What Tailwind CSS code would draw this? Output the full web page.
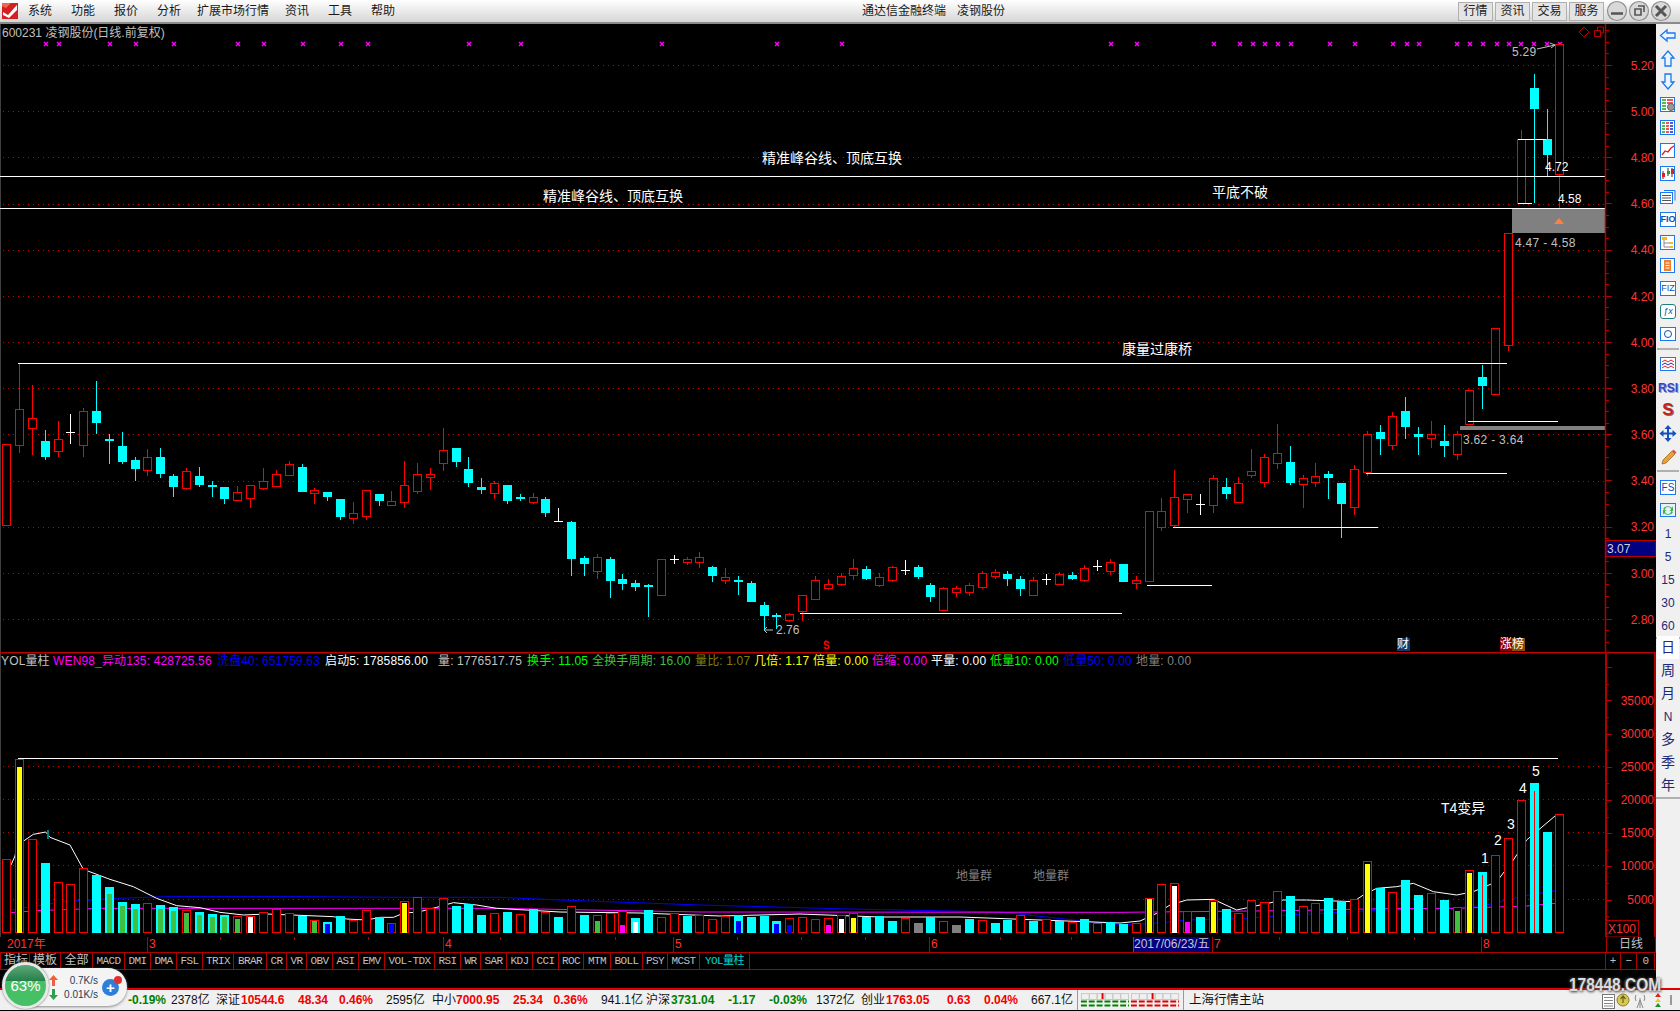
<!DOCTYPE html>
<html>
<head>
<meta charset="utf-8">
<script src="https://cdn.jsdelivr.net/npm/@tailwindcss/browser@4"></script>
</head>
<body class="bg-black">
<div class="relative flex h-[1011px] w-[1680px] flex-col overflow-hidden bg-black font-['Liberation_Sans','Noto_Sans_CJK_SC',sans-serif] text-xs">

  <!-- Title bar -->
  <header class="flex h-[24px] shrink-0 items-center border-b-2 border-[#8a8a8a] bg-linear-to-b from-white to-[#d6d6d6] text-[12px] text-[#1a1a1a]">
    <svg class="ml-[2px] h-[16px] w-[16px]" viewBox="0 0 16 16"><rect width="16" height="16" fill="#d42020"/><path d="M1 9 L6 12 L15 2 L15 7 L7 15 L1 12 Z" fill="#fff"/><path d="M0 0 H9 L4 5 L0 3Z" fill="#e86a50"/></svg>
    <nav class="flex">
      <span class="ml-[10px] w-[43px]">系统</span>
      <span class="w-[43px]">功能</span>
      <span class="w-[43px]">报价</span>
      <span class="w-[40px]">分析</span>
      <span class="w-[88px]">扩展市场行情</span>
      <span class="w-[43px]">资讯</span>
      <span class="w-[43px]">工具</span>
      <span class="w-[30px]">帮助</span>
    </nav>
    <div class="ml-[461px] flex w-[95px]">通达信金融终端</div>
    <div class="w-[60px]">凌钢股份</div>
    <div class="ml-[441px] flex h-[19px] gap-[2px] text-[#222]">
      <span class="flex h-[19px] w-[35px] items-center justify-center border border-[#b0b0b0] bg-[#e4e4e4]">行情</span>
      <span class="flex h-[19px] w-[35px] items-center justify-center border border-[#b0b0b0] bg-[#e4e4e4]">资讯</span>
      <span class="flex h-[19px] w-[35px] items-center justify-center border border-[#b0b0b0] bg-[#e4e4e4]">交易</span>
      <span class="flex h-[19px] w-[35px] items-center justify-center border border-[#b0b0b0] bg-[#e4e4e4]">服务</span>
    </div>
    <svg class="ml-[1px] h-[22px] w-[70px] shrink-0" viewBox="0 0 70 22">
      <g fill="#d8d8d8" stroke="#8f8f8f" stroke-width="1.2"><circle cx="12" cy="11" r="9.5"/><circle cx="34" cy="11" r="9.5"/><circle cx="56" cy="11" r="9.5"/></g>
      <path d="M6 13.5H18" stroke="#555" stroke-width="2.5"/>
      <path d="M30 9h6v6h-6zM33 6h6v6" fill="none" stroke="#555" stroke-width="1.6"/>
      <path d="M51 6l10 10M61 6l-10 10" stroke="#555" stroke-width="3"/>
    </svg>
  </header>

  <div class="flex h-[964px] shrink-0">
    <!-- Charts -->
    <main class="flex w-[1656px] flex-col">
      <svg id="price" class="block h-[628px] w-[1656px] shrink-0" viewBox="0 24 1656 628" font-size="12" fill="#c0c0c0">
        <g id="priceLayer"></g>
        <g fill="#fff" font-size="14">
          <text x="762" y="163">精准峰谷线、顶底互换</text>
          <text x="543" y="201">精准峰谷线、顶底互换</text>
          <text x="1212" y="197">平底不破</text>
          <text x="1122" y="354">康量过康桥</text>
        </g>
        <text x="2" y="37">600231 凌钢股份(日线.前复权)</text>
        <text x="1512" y="56" letter-spacing="0.3">5.29</text>
        <path d="M1537 49L1555 45M1550 43l5 2l-4 3" stroke="#c0c0c0" fill="none"/>
        <text x="1545" y="171" fill="#fff">4.72</text>
        <text x="1558" y="203" fill="#fff">4.58</text>
        <text x="1515" y="247" letter-spacing="0.3">4.47 - 4.58</text>
        <text x="1463" y="444" letter-spacing="0.3">3.62 - 3.64</text>
        <text x="776" y="634">2.76</text>
        <path d="M773 630H764M767 627l-3 3l3 3" stroke="#c0c0c0" fill="none"/>
        <path d="M1559 218l5 6h-10z" fill="#ff8040"/>
        <path d="M1584 27l5 5l-5 5l-5-5z" fill="none" stroke="#c00000"/>
        <path d="M1594.5 30.500h6v6h-6zM1597.500 30v-3h6v6h-3" fill="none" stroke="#c00000"/>
        <g text-anchor="end" fill="#ff3232">
          <text x="1654" y="70">5.20</text><text x="1654" y="116">5.00</text><text x="1654" y="162">4.80</text><text x="1654" y="208">4.60</text><text x="1654" y="254">4.40</text><text x="1654" y="301">4.20</text><text x="1654" y="347">4.00</text><text x="1654" y="393">3.80</text><text x="1654" y="439">3.60</text><text x="1654" y="485">3.40</text><text x="1654" y="531">3.20</text><text x="1654" y="578">3.00</text><text x="1654" y="624">2.80</text>
        </g>
        <rect x="1606" y="540.500" width="50" height="16" fill="#000080" stroke="#c00000"/>
        <text x="1607" y="553" fill="#d0d0d0">3.07</text>
        <rect x="1397" y="638" width="13" height="13" fill="#0a3c6e"/><text x="1397" y="648" fill="#fff">财</text>
        <rect x="1500" y="638" width="12" height="13" fill="#8b0000"/><rect x="1512" y="638" width="13" height="13" fill="#8b4a00"/><text x="1500" y="648" fill="#fff">涨榜</text>
        <text x="823" y="649" fill="#ff0000" font-weight="bold" font-size="10">S</text><path d="M826 640l2 2h-4z" fill="#f00"/>
      </svg>
      <svg id="volume" class="block h-[285px] w-[1656px] shrink-0" viewBox="0 652 1656 285" font-size="12" fill="#c0c0c0">
        <g id="volLayer"></g>
        <g fill="#fff" font-size="14">
          <text x="1441" y="813">T4变异</text>
          <text x="1481" y="863">1</text><text x="1494" y="845">2</text><text x="1507" y="829">3</text><text x="1519" y="793">4</text><text x="1532" y="776">5</text>
        </g>
        <text x="956" y="880" fill="#808080">地量群</text>
        <text x="1033" y="880" fill="#808080">地量群</text>
        <g text-anchor="end" fill="#ff3232">
          <text x="1654" y="705">35000</text><text x="1654" y="738">30000</text><text x="1654" y="771">25000</text><text x="1654" y="804">20000</text><text x="1654" y="837">15000</text><text x="1654" y="870">10000</text><text x="1654" y="904">5000</text>
        </g>
        <text x="1608" y="933" fill="#ff3232">X100</text>
        <g font-size="12" letter-spacing="0.15">
          <text x="1" y="665">YOL量柱</text>
          <text x="53" y="665" fill="#ff00ff">WEN98_异动135: 428725.56</text>
          <text x="217" y="665" fill="#0000ff">洗盘40: 651759.63</text>
          <text x="325" y="665" fill="#ffffff">启动5: 1785856.00</text>
          <text x="438" y="665" fill="#c0c0c0">量: 1776517.75</text>
          <text x="527" y="665" fill="#00ff00">换手: 11.05</text>
          <text x="592" y="665" fill="#40c040">全换手周期: 16.00</text>
          <text x="695" y="665" fill="#808000">量比: 1.07</text>
          <text x="754" y="665" fill="#ffff00">几倍: 1.17</text>
          <text x="813" y="665" fill="#ffff00">倍量: 0.00</text>
          <text x="872" y="665" fill="#ff00ff">倍缩: 0.00</text>
          <text x="931" y="665" fill="#ffffff">平量: 0.00</text>
          <text x="990" y="665" fill="#00ff00">低量10: 0.00</text>
          <text x="1063" y="665" fill="#0000ff">低量50: 0.00</text>
          <text x="1136" y="665" fill="#808080">地量: 0.00</text>
        </g>
      </svg>

      <!-- Time axis -->
      <div class="relative flex h-[16px] shrink-0 border-b border-[#b00000] text-[12px] leading-[15px] text-[#ff3232]">
        <span class="w-[147px] pl-[7px]">2017年</span>
        <span class="w-[296px] border-l border-[#b00000] pl-[1px]">3</span>
        <span class="w-[230px] border-l border-[#b00000] pl-[1px]">4</span>
        <span class="w-[256px] border-l border-[#b00000] pl-[1px]">5</span>
        <span class="w-[204px] border-l border-[#b00000] pl-[1px]">6</span>
        <span class="w-[77px] overflow-hidden whitespace-nowrap border-l border-[#3050c0] bg-[#000080] text-[#c8c8c8]">2017/06/23/五</span>
        <span class="ml-[2px] w-[269px] border-l border-[#b00000] pl-[1px]">7</span>
        <span class="w-[125px] border-l border-[#b00000] pl-[1px]">8</span>
        <span class="w-[50px] border-x border-[#b00000] text-center text-[#c0c0c0]">日线</span>
        <svg class="absolute left-0 top-0 h-[3px] w-[1606px]" viewBox="0 0 1606 3"><path d="M220.500 0v3M294.500 0v3M368.500 0v3M500.500 0v3M615.500 0v3M737.500 0v3M801.500 0v3M865.500 0v3M1000.500 0v3M1071.500 0v3M1279.500 0v3M1347.500 0v3M1414.500 0v3" stroke="#b00000"/></svg>
      </div>
      <!-- Tabs -->
      <div class="flex h-[17px] shrink-0 items-center border-b border-[#b00000] font-['Liberation_Mono','Noto_Sans_CJK_SC',monospace] text-[11px] tracking-[-0.6px] text-[#c0c0c0] *:flex *:h-full *:items-center *:justify-center *:border-r *:border-[#b00000]">
        <span class="w-[30px] border-l border-[#b00000] pl-[2px] text-[12px] tracking-normal">指标</span>
        <span class="w-[31px] text-[12px] tracking-normal">模板</span>
        <span class="w-[32px] text-[12px] tracking-normal">全部</span>
        <span class="w-[32px]">MACD</span><span class="w-[26px]">DMI</span><span class="w-[26px]">DMA</span><span class="w-[26px]">FSL</span><span class="w-[31px]">TRIX</span><span class="w-[33px]">BRAR</span><span class="w-[20px]">CR</span><span class="w-[20px]">VR</span><span class="w-[26px]">OBV</span><span class="w-[26px]">ASI</span><span class="w-[26px]">EMV</span><span class="w-[50px]">VOL-TDX</span><span class="w-[26px]">RSI</span><span class="w-[20px]">WR</span><span class="w-[26px]">SAR</span><span class="w-[26px]">KDJ</span><span class="w-[26px]">CCI</span><span class="w-[25px]">ROC</span><span class="w-[27px]">MTM</span><span class="w-[32px]">BOLL</span><span class="w-[25px]">PSY</span><span class="w-[32px]">MCST</span>
        <span class="w-[50px] text-[#00d8d8]">YOL量柱</span>
        <span class="w-[855px] !border-r-0"></span>
        <span class="w-[16px] border-l border-[#b00000] !tracking-normal">+</span><span class="w-[16px]">−</span><span class="w-[18px]">0</span>
      </div>
      <div class="h-[18px] shrink-0 bg-black"></div>
    </main>

    <!-- Side toolbar -->
    <aside class="flex w-[24px] flex-col items-center bg-[#f0f0f0] text-[#1c2a78] *:h-[23px] *:shrink-0">
      <svg class="w-[18px]" viewBox="0 0 18 23"><path d="M1.500 11.500L8 6v3h8v5H8v3z" fill="#eaf5ff" stroke="#1a78f0" stroke-width="1.300"/></svg>
      <svg class="w-[18px]" viewBox="0 0 18 23"><path d="M9 4l6 7h-3v8H6v-8H3z" fill="#eaf5ff" stroke="#1a78f0" stroke-width="1.300"/></svg>
      <svg class="w-[18px]" viewBox="0 0 18 23"><path d="M9 19l6-7h-3V4H6v8H3z" fill="#eaf5ff" stroke="#1a78f0" stroke-width="1.300"/></svg>
      <svg class="w-[18px]" viewBox="0 0 18 23"><rect x="1.500" y="4.500" width="14" height="14" fill="#fff" stroke="#1a78f0"/><path d="M3 7h4M3 10h4M3 13h4M3 16h4" stroke="#20a020" stroke-width="1.500"/><path d="M8 7h6M8 10h6" stroke="#e02020" stroke-width="1.500"/><circle cx="12" cy="14" r="3.500" fill="#999" stroke="#666"/></svg>
      <svg class="w-[18px]" viewBox="0 0 18 23"><rect x="1.500" y="4.500" width="14" height="14" fill="#fff" stroke="#1a78f0"/><path d="M3 7h3M3 10h3M3 13h3M3 16h3" stroke="#20a020" stroke-width="1.500"/><path d="M7 7h3M7 10h3M7 13h3M7 16h3" stroke="#e02020" stroke-width="1.500"/><path d="M11 7h3M11 10h3M11 13h3M11 16h3" stroke="#2020d0" stroke-width="1.500"/></svg>
      <svg class="w-[18px]" viewBox="0 0 18 23"><rect x="1.500" y="4.500" width="14" height="14" fill="#fff" stroke="#1a78f0"/><path d="M3 16l3-4 3 1 3-4 3-2" fill="none" stroke="#e02020" stroke-width="1.300"/></svg>
      <svg class="w-[18px]" viewBox="0 0 18 23"><rect x="1.500" y="4.500" width="14" height="14" fill="#fff" stroke="#1a78f0"/><path d="M4 9v8M9 6v8M13 6v9" stroke="#333"/><rect x="3" y="11" width="3" height="4" fill="#e02020"/><rect x="8" y="9" width="3" height="3" fill="#20a020"/><rect x="12" y="7" width="3" height="5" fill="#e02020"/></svg>
      <svg class="w-[18px]" viewBox="0 0 18 23"><path d="M5 5.500h11v10" fill="none" stroke="#1a78f0"/><rect x="1.500" y="7.500" width="12" height="11" fill="#fff" stroke="#1a78f0"/><path d="M3 10.500h9M3 13h9M3 15.500h9" stroke="#555"/></svg>
      <div class="flex w-[18px] items-center justify-center"><span class="flex h-[15px] w-[16px] items-center justify-center border border-[#1a78f0] bg-white text-[9px] font-bold leading-none text-[#0a50b0]">FIO</span></div>
      <svg class="w-[18px]" viewBox="0 0 18 23"><rect x="1.500" y="4.500" width="14" height="14" fill="#fff" stroke="#1a78f0"/><path d="M5 8v8h5M5 12h5" fill="none" stroke="#888"/><rect x="3" y="6" width="5" height="3" fill="#f0c020"/><rect x="10" y="11" width="4" height="2" fill="#f0c020"/><rect x="10" y="15" width="4" height="2" fill="#f0c020"/></svg>
      <svg class="w-[18px]" viewBox="0 0 18 23"><rect x="1.500" y="4.500" width="14" height="14" fill="#fff" stroke="#1a78f0"/><rect x="5" y="6" width="7" height="11" fill="#f08030"/><path d="M6.500 9h4M6.500 11.500h4M6.500 14h4" stroke="#fff"/></svg>
      <div class="flex w-[18px] items-center justify-center"><span class="flex h-[15px] w-[16px] items-center justify-center border border-[#1a78f0] bg-white text-[9px] leading-none text-[#0a50b0]">FIZ</span></div>
      <div class="flex w-[18px] items-center justify-center"><span class="flex h-[15px] w-[16px] items-center justify-center rounded-[3px] border border-[#208080] bg-white text-[9px] italic leading-none text-[#0a50b0]">ƒx</span></div>
      <svg class="w-[18px]" viewBox="0 0 18 23"><rect x="1.500" y="4.500" width="15" height="13" fill="#fff" stroke="#1a78f0"/><circle cx="9" cy="11" r="3.500" fill="none" stroke="#0a50b0"/></svg>
      <div class="!h-[2px] mt-[2px] mb-[3px] w-[22px] bg-[#b0b0b0]"></div>
      <svg class="w-[18px]" viewBox="0 0 18 23"><rect x="1.500" y="4.500" width="15" height="13" fill="#fff" stroke="#1a78f0"/><path d="M3 9l3-2 3 2 3-2 3 2" fill="none" stroke="#e02020"/><path d="M3 12l3-2 3 2 3-2 3 2" fill="none" stroke="#2020d0"/><path d="M3 15l3-2 3 2 3-2 3 2" fill="none" stroke="#e02020"/></svg>
      <div class="flex w-[24px] items-center justify-center text-[12px] font-bold text-[#3848c0] [text-shadow:1px_1px_0_#9098d8]">RSI</div>
      <div class="flex w-[24px] items-center justify-center text-[17px] font-bold text-[#c82020] [text-shadow:1px_1px_0_#707070]">S</div>
      <svg class="w-[18px]" viewBox="0 0 18 23"><path d="M9 3l3.500 4h-2.500v3.500h3.500V8l4 3.500-4 3.500v-2.500h-3.500V16h2.500L9 20l-3.500-4H8v-3.500H4.500V15L.5 11.500 4.500 8v2.500H8V7H5.500z" fill="#1450c0"/></svg>
      <svg class="w-[18px]" viewBox="0 0 18 23"><path d="M3 19l1-4L13 6l3 3-9 9z" fill="#f0a030" stroke="#806020" stroke-width=".7"/><path d="M13 6l1.500-1.500 3 3L16 9z" fill="#e05050"/></svg>
      <div class="!h-[2px] mt-[2px] mb-[4px] w-[22px] bg-[#b0b0b0]"></div>
      <div class="flex w-[18px] items-center justify-center"><span class="flex h-[15px] w-[16px] items-center justify-center border border-[#1a78f0] bg-white text-[10px] leading-none text-[#0a50b0]">FS</span></div>
      <svg class="w-[18px]" viewBox="0 0 18 23"><rect x="1.500" y="4.500" width="15" height="13" fill="#e8f0ff" stroke="#1a78f0"/><path d="M4 10a5 4 0 0 1 9-1l1-2v5h-4l2-1a3 3 0 0 0-6 0zM14 13a5 4 0 0 1-9 1l-1 2v-5h4l-2 1a3 3 0 0 0 6 0z" fill="#40b040"/></svg>
      <div class="flex items-center justify-center text-[12px]">1</div>
      <div class="flex items-center justify-center text-[12px]">5</div>
      <div class="flex items-center justify-center text-[12px]">15</div>
      <div class="flex items-center justify-center text-[12px]">30</div>
      <div class="flex items-center justify-center text-[12px]">60</div>
      <div class="!h-[2px] -mb-[3px] w-[24px] bg-[#b0b0b0]"></div>
      <div class="flex w-[22px] items-center justify-center bg-white text-[14px]">日</div>
      <div class="flex items-center justify-center text-[14px]">周</div>
      <div class="flex items-center justify-center text-[14px]">月</div>
      <div class="flex items-center justify-center text-[12px]">N</div>
      <div class="flex items-center justify-center text-[14px]">多</div>
      <div class="flex items-center justify-center text-[14px]">季</div>
      <div class="flex items-center justify-center text-[14px]">年</div>
      <div class="!h-[2px] w-[24px] bg-[#b0b0b0]"></div>
    </aside>
  </div>

  <!-- Status bar -->
  <footer class="flex h-[23px] shrink-0 items-center border-t-2 border-b border-t-[#e00000] border-b-black bg-[#f0f0f0] text-[12px] font-normal text-[#111]">
    <span class="ml-[128px] w-[43px] font-bold text-[#008000]">-0.19%</span>
    <span class="w-[45px]">2378亿</span>
    <span class="w-[25px]">深证</span><span class="w-[57px] font-bold text-[#f00000]">10544.6</span><span class="w-[41px] font-bold text-[#f00000]">48.34</span><span class="w-[47px] font-bold text-[#f00000]">0.46%</span>
    <span class="w-[46px]">2595亿</span>
    <span class="w-[24px]">中小</span><span class="w-[57px] font-bold text-[#f00000]">7000.95</span><span class="w-[40.6px] font-bold text-[#f00000]">25.34</span><span class="w-[47.4px] font-bold text-[#f00000]">0.36%</span>
    <span class="w-[45px]">941.1亿</span>
    <span class="w-[25px]">沪深</span><span class="w-[57px] font-bold text-[#008000]">3731.04</span><span class="w-[41px] font-bold text-[#008000]">-1.17</span><span class="w-[47px] font-bold text-[#008000]">-0.03%</span>
    <span class="w-[45px]">1372亿</span>
    <span class="w-[25px]">创业</span><span class="w-[61px] font-bold text-[#f00000]">1763.05</span><span class="w-[37px] font-bold text-[#f00000]">0.63</span><span class="w-[47px] font-bold text-[#f00000]">0.04%</span>
    <span class="w-[46px]">667.1亿</span>
    <svg class="h-[20px] w-[107px] shrink-0 border-x border-[#999]" viewBox="0 0 107 20">
      <g fill="none" stroke="#c8c8c8"><rect x="3.500" y="3.500" width="8" height="6"/><rect x="11.500" y="3.500" width="8" height="6"/><rect x="19.500" y="3.500" width="8" height="6"/><rect x="27.500" y="3.500" width="8" height="6"/><rect x="35.500" y="3.500" width="8" height="6"/><rect x="43.500" y="3.500" width="8" height="6"/><rect x="54.500" y="3.500" width="8" height="6"/><rect x="62.500" y="3.500" width="8" height="6"/><rect x="70.500" y="3.500" width="8" height="6"/><rect x="78.500" y="3.500" width="8" height="6"/><rect x="86.500" y="3.500" width="8" height="6"/><rect x="94.500" y="3.500" width="8" height="6"/></g>
      <rect x="24" y="3" width="2" height="6" fill="#e00000"/><rect x="75" y="3" width="2" height="6" fill="#e00000"/>
      <path d="M3 11.500h49M3 15.500h49" stroke="#008000" stroke-width="2" stroke-dasharray="6 2"/>
      <path d="M54 11.500h49M54 15.500h49" stroke="#e00000" stroke-width="2" stroke-dasharray="6 2"/>
    </svg>
    <span class="ml-[5px] w-[78px] shrink-0 text-[12.500px]">上海行情主站</span>
    <svg class="ml-[330px] h-[20px] w-[80px] shrink-0" viewBox="0 0 80 20">
      <rect x="5.500" y="4.500" width="12" height="14" fill="#fff" stroke="#777"/><path d="M7 7.500h9M7 10.500h9M7 13.500h9M7 16h9" stroke="#888"/>
      <circle cx="26" cy="10" r="6" fill="#d8c850" stroke="#8a8030"/><path d="M26 6v7M23.500 9l2.500-3 2.500 3" fill="none" stroke="#6a6020" stroke-width="1.200"/>
      <path d="M43 8v10M40 18l3-8 3 8M39 5a6 6 0 0 0 0 6M47 5a6 6 0 0 1 0 6" fill="none" stroke="#888"/>
      <path d="M61 3l3 4h-6z" fill="#e02020"/><path d="M61 8l3 4h-6z" fill="#e8d020"/><path d="M61 13l3 4h-6z" fill="#209020"/>
      <path d="M74 5v4M74 9v6" stroke="#999" stroke-width="2"/>
    </svg>
  </footer>

  <!-- Watermark -->
  <div class="absolute left-[1569px] top-[973px] origin-left scale-x-[0.86] text-[18px] font-bold leading-[24px] text-[#dcdcdc] [text-shadow:1px_1px_3px_#444,-1px_0_3px_#666]">178448.COM</div>

  <!-- Network speed widget -->
  <div class="absolute left-[22px] top-[968px] flex h-[38px] w-[105px] items-center rounded-r-[19px] bg-[#f4f4f4] shadow-[0_1px_3px_#888]">
    <div class="ml-[27px] flex w-[49px] flex-col gap-[1px] text-[10px] leading-[13px] text-[#20405a]">
      <span class="flex justify-between"><svg class="mt-[1px] h-[11px] w-[9px]" viewBox="0 0 9 11"><path d="M4.500 0L9 5H6v6H3V5H0z" fill="#f06040"/></svg>0.7K/s</span>
      <span class="flex justify-between"><svg class="mt-[1px] h-[11px] w-[9px]" viewBox="0 0 9 11"><path d="M4.500 11L9 6H6V0H3v6H0z" fill="#30a050"/></svg>0.01K/s</span>
    </div>
    <div class="relative ml-[4px] flex h-[17px] w-[17px] items-center justify-center rounded-full bg-[#2f7fd8] text-[15px] font-bold leading-none text-white">+<span class="absolute -right-[3px] -top-[3px] h-[8px] w-[8px] rounded-full bg-[#e03030]"></span></div>
  </div>
  <div class="absolute left-[2px] top-[962px] flex h-[47px] w-[47px] items-center justify-center overflow-hidden rounded-full border-[3px] border-[#e8e8e8] bg-[#45c064] text-[15px] text-white shadow-[0_0_2px_#666]">
    <div class="absolute inset-x-0 top-0 h-[16px] bg-linear-to-b from-[#5ea87a] to-[#23804a]"></div>
    <span class="relative">63%</span>
  </div>
</div>

<script>
var X = function (i) { return Math.round(6.3 + 12.835 * i); };
// Candle tables: [kind, high, bodyTop, bodyBottom, low] in the units of each capture
var a = [['r',253,253,494,494],['r',12,148,254,278],['r',75,175,203,285],['c',210,243,291,299],['r',183,238,272,291],['w',162,217,217,252],['r',144,153,254,291],['c',63,153,189,222],['c',222,237,243,312],['c',216,258,306,312],['c',291,300,327,363],['r',267,292,329,348],['c',264,291,342,354],['c',342,348,381,411],['r',324,334,383,390],['c',321,348,375,381],['c',363,375,381,411],['c',381,381,417,432],['r',378,397,419,419],['r',376,376,413,444],['r',324,364,383,390],['r',330,343,377,381],['r',303,313,345,348],['c',312,321,396,396],['r',384,391,398,432],['c',396,396,411,423],['c',417,417,471,480],['r',426,460,473,492],['r',391,391,467,480],['c',402,402,423,438],['r',393,424,434,438],['r',303,376,425,444],['r',309,343,392,402],['r',324,343,350,390],['r',204,271,308,333],['c',264,264,306,321],['c',291,327,369,381],['c',354,381,390,402],['r',363,370,398,417],['c',375,375,423,432],['c',402,411,417,423],['r',399,412,425,432],['c',411,417,459,471],['w',444,482,482,482]];
var b = [['c',486,487,522,538],['c',519,521,526,538],['r',517,520,533,540],['c',520,522,542,558],['c',536,540,545,551],['c',541,544,548,552],['c',545,546,548,576],['r',522,522,555,555],['w',518,522,522,526],['r',520,522,525,527],['r',515,520,525,530],['c',528,529,538,543],['r',530,539,541,545],['c',538,541,543,555],['c',542,544,562,562],['c',562,565,575,587],['c',572,574,576,587],['r',572,573,579,581],['r',555,555,570,580],['r',538,541,559,559],['r',540,545,549,551],['r',535,538,545,547],['r',522,530,537,541],['c',528,531,540,541],['r',535,539,546,548],['r',528,529,541,543],['w',523,532,532,537],['c',527,529,539,540],['c',544,546,557,562],['r',548,549,569,569],['r',547,549,553,557],['r',544,546,553,556],['r',533,535,548,550],['r',531,534,538,540],['c',533,536,540,547],['c',538,540,550,556],['r',539,541,555,556],['w',536,540,540,546],['r',534,536,545,546],['c',534,537,540,541],['r',527,530,541,543],['w',523,528,528,533],['r',522,525,533,537]];
var c = [['c',702,702,756,756],['r',738,750,759,777],['r',544,544,752,752],['r',504,544,592,603],['r',420,502,584,590],['r',492,493,508,549],['w',492,523,523,555],['r',435,445,524,549],['c',444,471,492,507],['r',441,460,515,515],['r',357,424,435,444],['r',372,382,455,471],['r',282,370,398,417],['c',348,396,459,465],['r',435,445,461,534],['r',399,439,455,471],['c',423,432,444,507],['c',459,459,522,624],['r',405,418,530,555],['r',303,313,425,438],['c',285,306,327,375],['r',246,259,344,360],['c',201,243,291,327],['c',291,312,321,375],['r',273,313,323,354],['c',285,333,348,381],['r',303,313,371,390],['r',180,181,281,285],['c',105,141,168,237],['r',-6,-6,191,195]];
var candles = [];
a.forEach(function (r) { candles.push([r[0]].concat(r.slice(1).map(function (v) { return v / 3 + 360; }))); });
b.forEach(function (r) { candles.push([r[0]].concat(r.slice(1).map(function (v) { return v * 1.0714; }))); });
c.forEach(function (r) { candles.push([r[0]].concat(r.slice(1).map(function (v) { return v / 3 + 330; }))); });
candles.push(['r', 233, 233, 345, 351], ['r', 130, 139.3, 203.3, 203.3], ['c', 74, 88, 109, 203.3], ['c', 109, 139.3, 155, 176], ['r', 44, 44, 173.7, 208]);

var s = '';
function line(x1, y1, x2, y2, col, w, extra) { return '<line x1="' + x1 + '" y1="' + y1 + '" x2="' + x2 + '" y2="' + y2 + '" stroke="' + col + '" stroke-width="' + (w || 1) + '" ' + (extra || '') + '/>'; }
var dot = 'stroke-dasharray="1 4"';
var i, y;
s += '<rect x="0" y="24" width="1" height="628" fill="#404040"/>';
for (i = 0; i <= 12; i++) { y = Math.round(65 + 46.17 * i) + .5; s += line(3, y, 1605, y, '#c80000', 1, dot); }
// magenta marks along the top
[45.7,59,110,135.7,174,238,264,302.5,340.7,367.5,469,521,662,777,842,1111,1137,1214,1240,1252.5,1265,1278,1291,1330,1355,1393,1406.6,1419,1457,1470,1483,1496.6,1509,1521,1534,1547,1560].forEach(function (x) {
  x = Math.round(x);
  s += '<path d="M' + (x - 2) + ' 42L' + (x + 2) + ' 46M' + (x + 2) + ' 42L' + (x - 2) + ' 46" stroke="#ff00ff" stroke-width="1.5"/>';
});
// candles
candles.forEach(function (d, i) {
  var x = X(i), col = d[0] === 'r' ? '#ff0000' : d[0] === 'c' ? '#00ffff' : '#ffffff';
  var top = Math.round(d[2]), bot = Math.round(d[3]);
  s += line(x + .5, Math.round(d[1]), x + .5, top, col);
  s += line(x + .5, bot, x + .5, Math.round(d[4]), col);
  if (d[0] === 'w') { s += line(x - 4, top + .5, x + 5, top + .5, col); s += line(x + .5, top, x + .5, bot, col); }
  else if (d[0] === 'c') { s += '<rect x="' + (x - 4) + '" y="' + top + '" width="9" height="' + Math.max(2, bot - top) + '" fill="#00ffff"/>'; s += line(x + .5, top, x + .5, bot, col); }
  else { s += '<rect x="' + (x - 3.5) + '" y="' + (top + .5) + '" width="8" height="' + Math.max(2, bot - top) + '" fill="#000" stroke="#ff0000"/>'; }
});
// horizontal annotation lines
[[0,176.5,1605,1],[0,208.5,1605,1],[18,363.5,1507,1],[1468,421.5,1558,1],[1366,473.5,1507,1],[1173,527.5,1378,1],[1147,585.5,1212,1],[800,613.5,1122,1],[1518,139.5,1546,1],[1518,203.5,1532,1]].forEach(function (l) { s += line(l[0], l[1], l[2], l[1], '#ffffff', l[3]); });
s += '<rect x="1512" y="209" width="93" height="24" fill="#808080"/>';
s += '<rect x="1460" y="426" width="145" height="4" fill="#808080"/>';
// price axis
s += line(1605.5, 24, 1605.5, 652, '#b00000', 1.5);
for (i = -3; i <= 50; i++) { y = Math.round(65 + 11.54 * i) + .5; if (y > 24) s += line(1605, y, i % 4 === 0 ? 1612 : 1609, y, '#b00000'); }
document.getElementById('priceLayer').innerHTML = s;

// Volume panel
var base = 932.7;
var T = function (v, off) { return v / 3 + off; };
var v1 = [['r',328],['y',28,51],['r',268],['c',339],['r',397],['r',403],['r',355],['c',375],['cg',411,432],['cg',456,468],['cg',462,477],['r',460],['cg',465,477],['cg',471,483],['rg',481,489],['cg',486,495],['cg',492,501],['cg',495,501],['rg',499,507],['rw',499,501],['r',487],['r',478],['r',490],['c',498],['rg',511,513],['cb',516,522],['c',498],['r',511],['r',481],['c',502],['rb',520,522],['y',454,459],['r',442],['r',475],['r',445],['c',468],['c',462],['c',495],['r',490]];
var v2 = [['c',912],['r',914],['c',909],['r',912],['c',917],['r',906],['c',915],['rg',915,921],['r',913],['rm',911,925],['cw',918,922],['c',910],['r',917],['r',913],['c',916],['r',915],['r',919],['r',916],['cb',915,921],['c',917],['c',916],['cb',921,924],['rb',918,925],['r',917],['r',919],['rm',918,925],['rw',915,919],['ry',913,918],['c',917],['c',916],['c',921],['r',918],['x',923],['c',917],['r',921],['x',925],['c',919],['r',920],['c',923],['c',920],['r',915],['c',921],['r',919],['c',921],['r',922],['c',919],['r',923],['c',922]];
var v3 = [['c',522],['r',520],['y',445,447],['r',403],['rw',400,408],['rm',484,516],['c',501],['y',451,456],['c',477],['r',490],['r',451],['r',457],['r',424],['c',438],['r',469],['r',460],['c',444],['c',453],['r',447],['y',334,342],['c',414],['r',427],['c',390],['c',435],['r',430],['c',450],['rg',472,483],['y',361,369],['c',366],['r',316],['r',265],['r',151],['c',99],['c',246],['r',193]];
var bars = [];
v1.forEach(function (r) { bars.push([r[0], T(r[1], 750), r[2] ? T(r[2], 750) : 0]); });
v2.forEach(function (r) { bars.push([r[0], r[1], r[2] || 0]); });
v3.forEach(function (r) { bars.push([r[0], T(r[1], 750), r[2] ? T(r[2], 750) : 0]); });

var poly = function (pts, col) { return '<polyline fill="none" stroke="' + col + '" stroke-width="1" points="' + pts.join(' ') + '"/>'; };
var conv = function (arr, ox) { return arr.map(function (p) { return (p[0] / 3 + ox) + ',' + (p[1] / 3 + 750); }); };
var t = '';
t += '<rect x="0" y="652" width="1" height="285" fill="#404040"/>';
[766.5, 799.5, 832.5, 865.5, 899.5].forEach(function (y) { t += line(3, y, 1605, y, '#c80000', 1, dot); });
var white = conv([[33,345],[45,318],[50,290],[75,270],[100,253],[137,246],[150,262],[210,285],[250,358],[330,388],[400,410],[470,445],[530,467],[600,473],[660,487],[730,495],[800,492],[1000,500],[1040,507],[1100,510],[1140,502],[1180,502],[1210,490],[1260,485],[1310,472],[1360,458],[1430,465],[1490,475]], 0)
  .concat(['560,912','640,913','720,916','800,914','880,917','960,917','1040,920'])
  .concat(conv([[0,519],[60,513],[110,490],[150,465],[200,450],[280,448],[350,480],[420,465],[490,450],[560,450],[700,455],[730,435],[770,415],[830,410],[880,400],[940,425],[1010,435],[1060,425],[1130,395],[1180,330],[1220,270],[1305,198]], 1120));
var blue = conv([[33,480],[110,468],[200,453],[280,450],[350,445],[500,440],[700,440],[900,440],[1200,442],[1500,442]], 0)
  .concat(['560,900','700,905','850,909','1000,912'])
  .concat(conv([[0,525],[100,520],[200,510],[380,505],[500,495],[800,480],[1000,475],[1100,465],[1200,440],[1305,422]], 1120));
var mag = conv([[33,488],[110,482],[300,475],[1500,475]], 0)
  .concat(['700,912'])
  .concat(conv([[0,487],[200,485],[500,482],[800,476],[1000,475],[1100,472],[1220,468],[1305,460]], 1120));
t += poly(blue, '#0000ff') + poly(mag, '#ff00ff') + poly(white, '#ffffff');
t += '<rect x="47" y="830" width="2" height="9" fill="#008080"/>';
var inner = { g: '#40c040', w: '#ffffff', b: '#0000ff', m: '#ff00ff', y: '#ffff00' };
bars.forEach(function (d, i) {
  var x = X(i), k = d[0], top = Math.round(d[1]), h = Math.round(base) - top;
  if (k[0] === 'c') { t += '<rect x="' + (x - 4) + '" y="' + top + '" width="9" height="' + h + '" fill="#00ffff"/>'; }
  else if (k === 'x') { t += '<rect x="' + (x - 4) + '" y="' + top + '" width="9" height="' + h + '" fill="#808080"/>'; return; }
  else { t += '<rect x="' + (x - 3.5) + '" y="' + (top + .5) + '" width="8" height="' + (h - 1) + '" fill="#000" stroke="#ff0000"/>'; }
  if (k === 'y' || k.length > 1) {
    var col = k === 'y' ? '#ffff00' : inner[k[1]], it = Math.round(d[2]);
    t += '<rect x="' + (x - 2) + '" y="' + it + '" width="5" height="' + (Math.round(base) - it) + '" fill="' + col + '"/>';
  }
});
t += line(X(115) + .5, 875, X(115) + .5, 933, '#ff0000') + line(X(119) + .5, 791, X(119) + .5, 933, '#ff0000');
t += line(18, 758.5, 1558, 758.5, '#ffffff');
// frame and axis
t += '<rect x="0" y="652" width="1656" height="1.500" fill="#c00000"/>';
t += '<rect x="1605" y="652" width="2" height="285" fill="#b00000"/><rect x="1654" y="652" width="2" height="285" fill="#b00000"/>';
t += '<rect x="1606.500" y="920.500" width="32" height="16.500" fill="none" stroke="#b00000"/>';
for (i = 0; i <= 16; i++) { y = Math.round(899.5 - 16.6 * (i - 2)) + .5; if (y < 934 && y > 653) t += line(1606, y, i % 2 === 0 ? 1612 : 1609, y, '#b00000'); }
document.getElementById('volLayer').innerHTML = t;
</script>
</body>
</html>
